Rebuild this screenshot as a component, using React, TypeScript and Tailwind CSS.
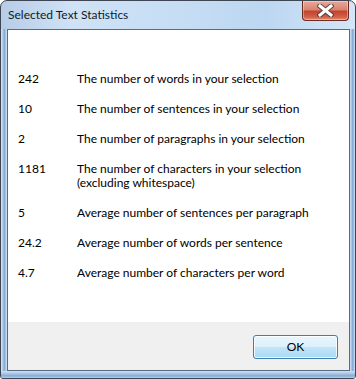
import React from "react";

const rows: [string, string[]][] = [
  ["242", ["The number of words in your selection"]],
  ["10", ["The number of sentences in your selection"]],
  ["2", ["The number of paragraphs in your selection"]],
  ["1181", ["The number of characters in your selection", "(excluding whitespace)"]],
  ["5", ["Average number of sentences per paragraph"]],
  ["24.2", ["Average number of words per sentence"]],
  ["4.7", ["Average number of characters per word"]],
];

function CloseButton() {
  return (
    <div className="absolute right-[6px] top-0 w-[47px] h-[20px] rounded-b-[4px] border border-t-0 border-[#6b2a22] bg-[linear-gradient(to_bottom,#e9a99b_0%,#d98470_45%,#c4452f_55%,#cf5a42_80%,#e08a6e_100%)] flex items-center justify-center shadow-[inset_0_0_0_1px_rgba(255,255,255,0.35)]">
      <svg width="17" height="13" viewBox="0 0 17 13">
        <path d="M3 2 L14 11 M14 2 L3 11" stroke="#3b3b3b" strokeWidth="5.2" strokeLinecap="square" fill="none" opacity="0.75" />
        <path d="M3 2 L14 11 M14 2 L3 11" stroke="#ffffff" strokeWidth="3" strokeLinecap="square" fill="none" />
      </svg>
    </div>
  );
}

export default function App() {
  return (
    <div
      className="relative w-[356px] h-[379px] rounded-t-[7px] rounded-b-[3px] border border-[#3d4652] overflow-hidden flex flex-col bg-[linear-gradient(to_right,#b7cde6_0%,#cfe2f6_20%,#c6ddf4_50%,#bcd7f1_75%,#d4e6f8_100%)]"
      style={{ fontFamily: 'Lato, "Open Sans", sans-serif' }}
    >
      <div className="h-[28px] shrink-0 flex items-start pl-[7px] pt-[6px] text-[12px] leading-[15px] text-[#0d1a2b]">
        Selected Text Statistics
      </div>
      <CloseButton />
      <div className="flex flex-1 min-h-0">
        <div className="w-[6px] shrink-0 bg-[linear-gradient(to_right,#dae8f7_0%,#a9c5e4_35%,#7fa6d2_55%,#aac6e5_75%,#d0e2f4_100%)]" />
        <div className="flex-1 border border-[#5a6b80] flex flex-col bg-white">
          <div className="flex-1 bg-white pt-[42px] pl-[10px] flex flex-col gap-[16px] text-[12px] leading-[14px] text-black">
            {rows.map(([n, lines]) => (
              <div key={n} className="flex">
                <div className="w-[59px] shrink-0">{n}</div>
                <div className="flex flex-col">
                  {lines.map((l) => (
                    <div key={l}>{l}</div>
                  ))}
                </div>
              </div>
            ))}
          </div>
          <div className="h-[48px] shrink-0 bg-[#f0f0f0] flex items-start justify-end pt-[13px] pr-[11px]">
            <button className="w-[85px] h-[24px] rounded-[3px] border border-[#3c7fb1] bg-[linear-gradient(to_bottom,#e9f6fd_0%,#dcf0fc_48%,#c2e4f8_52%,#a9d9f5_100%)] shadow-[inset_0_0_0_1px_rgba(255,255,255,0.8)] text-[12px] leading-[14px] text-black flex items-center justify-center">
              OK
            </button>
          </div>
        </div>
        <div className="w-[5px] shrink-0 bg-[linear-gradient(to_right,#d0e2f4_0%,#aac6e5_30%,#7fa6d2_55%,#a9c5e4_80%,#dae8f7_100%)]" />
      </div>
      <div className="h-[7px] shrink-0 bg-[linear-gradient(to_bottom,#cfe1f4_0%,#a7c4e4_40%,#86acd6_70%,#b8d0ea_100%)]" />
    </div>
  );
}
